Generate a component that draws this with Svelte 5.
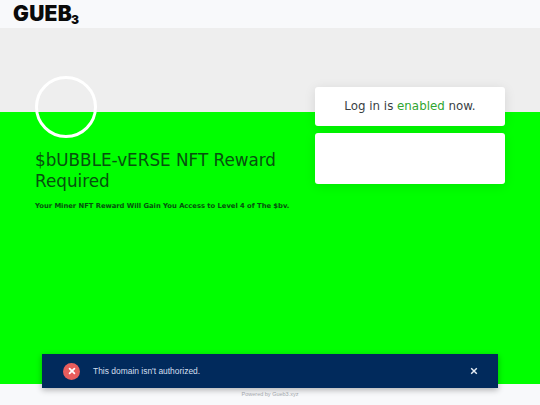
<script lang="ts">
  let toastOpen = $state(true);
</script>

<div class="page">
  <header class="top">
    <div class="logo">GUEB<span class="sub">3</span></div>
  </header>

  <main class="hero">
    <div class="band"></div>
    <div class="field">
      <section class="info">
        <div class="avatar"></div>
        <h1>$bUBBLE-vERSE NFT Reward Required</h1>
        <p>Your Miner NFT Reward Will Gain You Access to Level 4 of The $bv.</p>
      </section>
      <aside class="side">
        <div class="card status"><span>Log in is <span class="ok">enabled</span> now.</span></div>
        <div class="card empty"></div>
      </aside>
    </div>
  </main>

  <footer class="foot">Powered by Gueb3.xyz</footer>

  {#if toastOpen}
    <div class="toast" role="alert">
      <span class="err">
        <svg viewBox="0 0 10 10" width="8" height="8" aria-hidden="true">
          <path d="M2 2 L8 8 M8 2 L2 8" stroke="#fff" stroke-width="2.2" stroke-linecap="round" />
        </svg>
      </span>
      <span class="msg">This domain isn't authorized.</span>
      <button class="close" aria-label="close" onclick={() => (toastOpen = false)}>
        <svg viewBox="0 0 10 10" width="8" height="8" aria-hidden="true">
          <path d="M1.5 1.5 L8.5 8.5 M8.5 1.5 L1.5 8.5" stroke="#e6edf5" stroke-width="1.8" />
        </svg>
      </button>
    </div>
  {/if}
</div>

<style>
  :global(body) {
    margin: 0;
    background: #f8f9fb;
  }
  .page {
    position: relative;
    width: 540px;
    height: 405px;
    overflow: hidden;
    display: flex;
    flex-direction: column;
    font-family: "DejaVu Sans", sans-serif;
  }
  .top {
    height: 28px;
    flex: none;
    background: #f8f9fb;
    display: flex;
    align-items: center;
    padding-left: 13px;
  }
  .logo {
    font-family: Inter, "Liberation Sans", sans-serif;
    font-weight: 900;
    font-size: 21px;
    letter-spacing: 0.3px;
    color: #0a0a0a;
    line-height: 1;
    margin-top: -1px;
  }
  .sub {
    font-size: 12px;
    position: relative;
    top: 3px;
    margin-left: -1px;
  }
  .hero {
    flex: 1;
    display: flex;
    flex-direction: column;
    background: #00ff00;
    position: relative;
  }
  .band {
    height: 84px;
    flex: none;
    background: #eeeeee;
  }
  .field {
    position: absolute;
    inset: 0;
    display: flex;
    justify-content: space-between;
    padding: 48px 35px 0;
  }
  .info {
    width: 262px;
  }
  .avatar {
    width: 56px;
    height: 56px;
    border: 3.5px solid #fff;
    border-radius: 50%;
  }
  h1 {
    margin: 12px 0 0;
    font-size: 16.8px;
    line-height: 20.5px;
    font-weight: 400;
    color: #07500f;
  }
  p {
    margin: 10px 0 0;
    font-size: 6.75px;
    line-height: 10px;
    font-weight: 700;
    white-space: nowrap;
    color: #07500f;
  }
  .side {
    width: 190px;
    margin-top: 11px;
    display: flex;
    flex-direction: column;
    gap: 7px;
  }
  .card {
    background: #fff;
    border-radius: 3px;
    box-sizing: border-box;
    box-shadow: 0 2px 12px rgba(0, 0, 0, 0.1);
  }
  .status {
    height: 39px;
    display: flex;
    align-items: center;
    justify-content: center;
    padding-bottom: 2px;
    font-size: 11.85px;
    color: #3a3f45;
  }
  .ok {
    color: #2fa52f;
  }
  .empty {
    height: 51px;
  }
  .foot {
    height: 21px;
    flex: none;
    background: #f8f9fb;
    box-sizing: border-box;
    padding-top: 7px;
    text-align: center;
    font-family: "Liberation Sans", sans-serif;
    font-size: 5.5px;
    color: #a9adb3;
  }
  .toast {
    position: absolute;
    left: 42px;
    top: 354px;
    width: 456px;
    height: 34px;
    box-sizing: border-box;
    padding: 0 20px 0 21px;
    background: #012a5c;
    display: flex;
    align-items: center;
    box-shadow: 0 2px 6px rgba(0, 0, 0, 0.3);
  }
  .err {
    width: 17px;
    height: 17px;
    border-radius: 50%;
    background: #e85d5d;
    display: flex;
    align-items: center;
    justify-content: center;
    flex: none;
  }
  .msg {
    margin-left: 13px;
    flex: 1;
    font-family: "Liberation Sans", sans-serif;
    font-size: 8.45px;
    color: #d3dfee;
  }
  .close {
    background: none;
    border: 0;
    padding: 0;
    display: flex;
    width: 8px;
    height: 8px;
  }
</style>
